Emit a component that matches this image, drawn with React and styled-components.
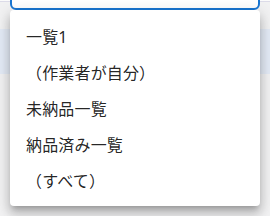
import React from 'react';
import styled, { createGlobalStyle } from 'styled-components';

const GlobalStyle = createGlobalStyle`
  body {
    margin: 0;
    background: #ffffff;
    font-family: "Noto Sans", "Noto Sans CJK JP", sans-serif;
  }
`

const Page = styled.div`
  position: relative;
  width: 270px;
  height: 216px;
  overflow: hidden;
  background: #f1f1f2;
`

const Top = styled.div`
  background: #fbfbfb;
  padding: 0 10px;
  height: 33px;
  border-bottom: 1px solid #dcdbe8;
`

const Field = styled.div`
  height: 38px;
  margin-top: -32px;
  border: 2px solid #1976d2;
  border-radius: 6px;
  background: #ffffff;
`

const Rows = styled.div`
  display: flex;
  flex-direction: column;
  padding-top: 27px;
`

const Row = styled.div`
  height: ${p => p.h}px;
  background: ${p => (p.selected ? '#e3eaf5' : 'transparent')};
`

const Menu = styled.ul`
  position: absolute;
  top: 10px;
  left: 10px;
  width: 250px;
  margin: 0;
  padding: 8px 0;
  list-style: none;
  background: #ffffff;
  border-radius: 4px;
  box-shadow: 0px 5px 5px -3px rgba(0, 0, 0, 0.2),
    0px 8px 10px 1px rgba(0, 0, 0, 0.14),
    0px 3px 14px 2px rgba(0, 0, 0, 0.12);
`

const Item = styled.li`
  display: flex;
  align-items: center;
  height: 36px;
  padding: 0 16px;
  font-size: 16px;
  color: rgba(0, 0, 0, 0.87);
  letter-spacing: 0.01em;
  white-space: nowrap;
`

const items = ['一覧1', '（作業者が自分）', '未納品一覧', '納品済み一覧', '（すべて）']

export default function App() {
  return (
    <>
      <GlobalStyle />
      <Page>
        <Top>
          <Field />
        </Top>
        <Rows>
          <Row selected h={45} />
          <Row h={110} />
        </Rows>
        <Menu>
          {items.map(label => (
            <Item key={label}>{label}</Item>
          ))}
        </Menu>
      </Page>
    </>
  )
}
